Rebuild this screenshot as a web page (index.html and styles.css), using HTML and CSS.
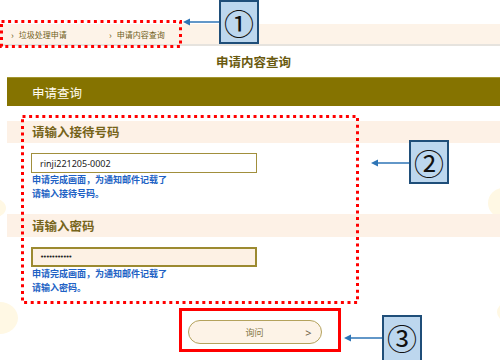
FILE: index.html
```html
<!doctype html>
<html lang="zh-CN">
  <head>
    <meta charset="UTF-8" />
    <meta name="viewport" content="width=device-width, initial-scale=1.0" />
    <title>申请内容查询</title>
    <link rel="stylesheet" href="styles.css">
  </head>
  <body>
    <nav class="crumbs">
      <span class="crumb">垃圾处理申请</span>
      <span class="crumb">申请内容查询</span>
    </nav>

    <div class="main">
      <h1 class="title">申请内容查询</h1>

      <section class="panel">
        <h2 class="panel-head">申请查询</h2>

        <div class="field">
          <h3 class="field-head">请输入接待号码</h3>
          <div class="field-body">
            <input type="text" class="text-input" value="rinji221205-0002" />
            <p class="hint">申请完成画面，为通知邮件记载了<br />请输入接待号码。</p>
          </div>
        </div>

        <div class="field field-pass">
          <h3 class="field-head">请输入密码</h3>
          <div class="field-body">
            <input type="password" class="text-input pass-input" value="12345678901" />
            <p class="hint">申请完成画面，为通知邮件记载了<br />请输入密码。</p>
          </div>
        </div>

        <div class="actions">
          <button class="query-btn"><span class="btn-label">询问</span><span class="btn-arrow">&gt;</span></button>
        </div>
      </section>
    </div>

    <!-- background decoration -->
    <div class="blob blob-l1"></div>
    <div class="blob blob-l2"></div>
    <div class="blob blob-r1"></div>
    <div class="blob blob-r2"></div>

    <!-- annotations -->
    <svg class="mark mark-1" width="182" height="28">
      <rect x="1.5" y="1.5" width="179" height="25" fill="none" stroke="#ff0000" stroke-width="3" stroke-dasharray="3 3.6" />
    </svg>
    <svg class="mark mark-2" width="338" height="189">
      <rect x="1.5" y="1.5" width="335" height="186" fill="none" stroke="#ff0000" stroke-width="3" stroke-dasharray="3 3.6" />
    </svg>
    <div class="mark mark-3"></div>

    <svg class="arrow arrow-1" width="38" height="10">
      <line x1="5" y1="5" x2="38" y2="5" stroke="#2e75b6" stroke-width="1.6" />
      <polygon points="0,5 7,1.5 7,8.5" fill="#2e75b6" />
    </svg>
    <svg class="arrow arrow-2" width="38" height="10">
      <line x1="5" y1="5" x2="38" y2="5" stroke="#2e75b6" stroke-width="1.6" />
      <polygon points="0,5 7,1.5 7,8.5" fill="#2e75b6" />
    </svg>
    <svg class="arrow arrow-3" width="39" height="10">
      <line x1="5" y1="5" x2="39" y2="5" stroke="#2e75b6" stroke-width="1.6" />
      <polygon points="0,5 7,1.5 7,8.5" fill="#2e75b6" />
    </svg>

    <div class="callout callout-1">①</div>
    <div class="callout callout-2">②</div>
    <div class="callout callout-3">③</div>
  </body>
</html>
```

FILE: styles.css
```css
body {
  margin: 0;
  width: 500px;
  height: 360px;
  overflow: hidden;
  position: relative;
  background: #fff;
  font-family: "Noto Sans CJK SC", "Noto Sans", sans-serif;
}
.crumbs {
  display: flex;
  align-items: center;
  margin-top: 24px;
  height: 20px;
  background-color: #fdf3e8;
  border-bottom: 2px solid #e6e3de;
}
.crumb {
  width: 98px;
  padding-left: 11px;
  box-sizing: border-box;
  font-size: 8px;
  color: #6f6020;
}
.crumb::before {
  content: "›";
  display: inline-block;
  margin-right: 5px;
  font-size: 9px;
  position: relative;
  top: 1px;
}
.main {
  margin-left: 7px;
  position: relative;
  z-index: 1;
}
.title {
  margin: 0;
  height: 31px;
  line-height: 31px;
  text-align: center;
  font-size: 12.5px;
  font-weight: bold;
  color: #6a5a10;
}
.panel-head {
  margin: 0;
  height: 29px;
  line-height: 29px;
  padding-left: 25px;
  background-color: #857300;
  border-top: 1px solid #a3962f;
  box-sizing: border-box;
  font-size: 12.5px;
  font-weight: normal;
  color: #fffbef;
}
.field {
  margin-top: 15px;
}
.field-pass {
  margin-top: 13px;
}
.field-head {
  margin: 0;
  height: 22px;
  line-height: 22px;
  padding-left: 25px;
  background-color: #fdf1e6;
  font-size: 12.5px;
  font-weight: bold;
  color: #76641a;
}
.field-pass .field-head {
  height: 23px;
  line-height: 23px;
}
.field-body {
  padding: 10px 0 0 24px;
}
.text-input {
  display: block;
  width: 226px;
  height: 20px;
  box-sizing: border-box;
  margin: 0;
  padding: 0 8px;
  border: 1px solid #a18f3c;
  background: #fff;
  font-family: "Noto Sans", sans-serif;
  font-size: 9px;
  color: #222;
  outline: none;
}
.pass-input {
  border: 2px solid #9c8a30;
  background-color: #fdf1e4;
  font-family: "DejaVu Sans", sans-serif;
  font-size: 7px;
  letter-spacing: -1.3px;
  padding-left: 7px;
}
.hint {
  margin: 0;
  padding-left: 1px;
  font-size: 9px;
  line-height: 14px;
  font-weight: bold;
  color: #2061c4;
}
.actions {
  display: flex;
  justify-content: center;
  margin-top: 25px;
}
.query-btn {
  display: grid;
  grid-template-columns: 1fr auto 1fr;
  align-items: center;
  width: 134px;
  height: 24px;
  margin-left: 2px;
  padding: 0 9px;
  border: 1px solid #b4a25c;
  border-radius: 12px;
  background-color: #fdf3e7;
  font-family: "Noto Sans CJK SC", sans-serif;
  font-size: 9px;
  color: #857848;
  cursor: pointer;
}
.btn-label {
  grid-column: 2;
}
.btn-arrow {
  grid-column: 3;
  justify-self: end;
  font-family: "Noto Sans", sans-serif;
  font-size: 11px;
  color: #6e6244;
}

/* faint round shapes at the edges */
.blob {
  position: absolute;
  border-radius: 50%;
  background-color: #fff8e4;
}
.blob-l1 { left: -22px; top: 198px; width: 28px; height: 20px; }
.blob-l2 { left: -18px; top: 302px; width: 36px; height: 32px; }
.blob-r1 { left: 488px; top: 188px; width: 30px; height: 30px; }
.blob-r2 { left: 497px; top: 303px; width: 18px; height: 18px; }

/* annotation overlays */
.mark {
  position: absolute;
  z-index: 2;
}
.mark-1 { left: 0; top: 20px; }
.mark-2 { left: 21px; top: 115px; }
.mark-3 {
  left: 179px;
  top: 308px;
  width: 162px;
  height: 44px;
  box-sizing: border-box;
  border: 3px solid #ff0000;
}
.arrow {
  position: absolute;
  z-index: 2;
}
.arrow-1 { left: 183px; top: 17px; }
.arrow-2 { left: 371px; top: 158px; }
.arrow-3 { left: 344px; top: 333px; }
.callout {
  position: absolute;
  z-index: 3;
  width: 40px;
  height: 44px;
  box-sizing: border-box;
  border: 2.5px solid #1f4e79;
  background-color: #bdd7ee;
  display: flex;
  align-items: center;
  justify-content: center;
  font-family: "Noto Sans CJK SC", sans-serif;
  font-size: 30px;
  line-height: 1;
  color: #111;
}
.callout-1 { left: 219px; top: 0; }
.callout-2 { left: 409px; top: 140px; }
.callout-3 { left: 382px; top: 315px; height: 50px; padding-bottom: 6px; }
```
